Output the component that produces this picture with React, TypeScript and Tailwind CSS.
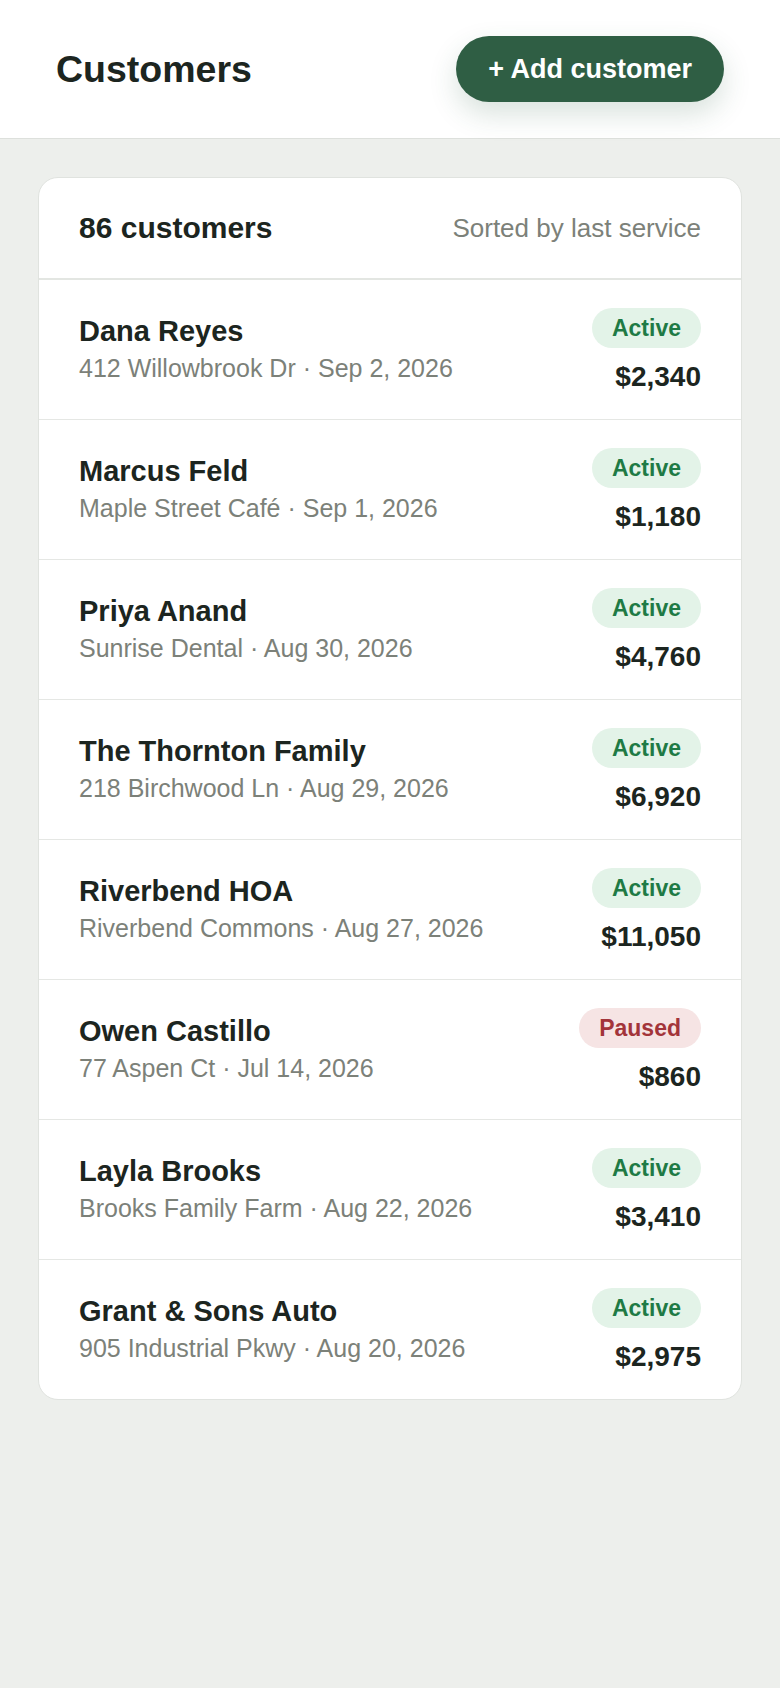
import React from "react";

type Customer = {
  name: string;
  sub: string;
  status: "Active" | "Paused";
  amount: string;
};

const customers: Customer[] = [
  { name: "Dana Reyes", sub: "412 Willowbrook Dr · Sep 2, 2026", status: "Active", amount: "$2,340" },
  { name: "Marcus Feld", sub: "Maple Street Café · Sep 1, 2026", status: "Active", amount: "$1,180" },
  { name: "Priya Anand", sub: "Sunrise Dental · Aug 30, 2026", status: "Active", amount: "$4,760" },
  { name: "The Thornton Family", sub: "218 Birchwood Ln · Aug 29, 2026", status: "Active", amount: "$6,920" },
  { name: "Riverbend HOA", sub: "Riverbend Commons · Aug 27, 2026", status: "Active", amount: "$11,050" },
  { name: "Owen Castillo", sub: "77 Aspen Ct · Jul 14, 2026", status: "Paused", amount: "$860" },
  { name: "Layla Brooks", sub: "Brooks Family Farm · Aug 22, 2026", status: "Active", amount: "$3,410" },
  { name: "Grant & Sons Auto", sub: "905 Industrial Pkwy · Aug 20, 2026", status: "Active", amount: "$2,975" },
];

export default function App() {
  return (
    <div className="min-h-[1688px] bg-[#edefec] font-['Liberation_Sans',Arial,sans-serif]">
      <header className="flex items-center justify-between bg-white px-[56px] py-[36px] border-b border-[#dde0dc]">
        <h1 className="text-[37.5px] font-bold leading-[44px] text-[#1c2520]">Customers</h1>
        <button className="h-[66px] rounded-full bg-[#2f5e44] px-[32px] text-[27px] font-bold text-white shadow-[0_12px_28px_rgba(47,94,68,0.18)]">
          + Add customer
        </button>
      </header>

      <main className="px-[38px] pt-[38px]">
        <div className="overflow-hidden rounded-[20px] border border-[#e0e3df] bg-white">
          <div className="flex h-[102px] items-center justify-between border-b-2 border-[#e3e6e2] px-[40px]">
            <span className="text-[30px] font-bold leading-[36px] text-[#1c2520]">86 customers</span>
            <span className="text-[26px] leading-[32px] text-[#7c8179]">Sorted by last service</span>
          </div>
          {customers.map((c, i) => (
            <div
              key={c.name}
              className={`flex items-center justify-between px-[40px] py-[28px] ${
                i < customers.length - 1 ? "border-b border-[#e5e7e4]" : ""
              }`}
            >
              <div className="flex flex-col gap-[2px]">
                <span className="text-[29px] font-bold leading-[35px] text-[#1c2520]">{c.name}</span>
                <span className="text-[25px] leading-[35px] text-[#7c8179]">{c.sub}</span>
              </div>
              <div className="flex flex-col items-end gap-[15px]">
                {c.status === "Active" ? (
                  <span className="flex h-[40px] items-center rounded-full bg-[#e3f3e8] px-[20px] text-[23px] font-bold text-[#1f7a45]">
                    Active
                  </span>
                ) : (
                  <span className="flex h-[40px] items-center rounded-full bg-[#f6e4e4] px-[20px] text-[23px] font-bold text-[#a3343a]">
                    Paused
                  </span>
                )}
                <span className="text-[28px] font-bold leading-[28px] text-[#1c2520]">{c.amount}</span>
              </div>
            </div>
          ))}
        </div>
      </main>
    </div>
  );
}
